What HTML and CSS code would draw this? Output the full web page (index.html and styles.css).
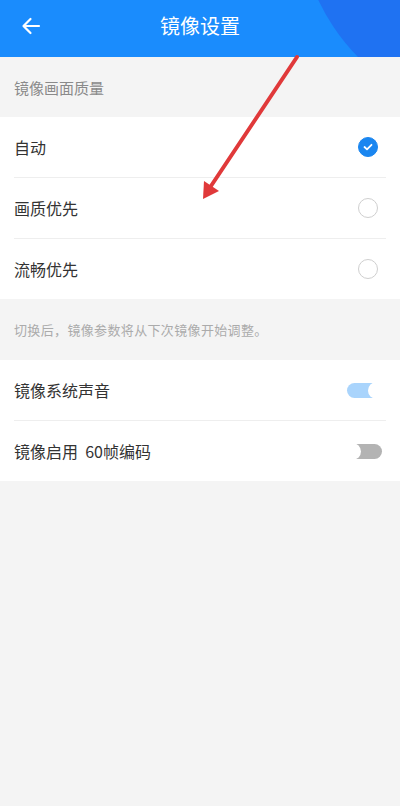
FILE: index.html
```html
<!DOCTYPE html>
<html lang="zh">
<head>
<meta charset="utf-8">
<link rel="stylesheet" href="styles.css">
</head>
<body>
<div class="page">
  <header class="topbar">
    <div class="topbar-circle"></div>
    <svg class="back" width="20" height="18" viewBox="0 0 20 18"><path d="M18 9H3M9.5 2L2.5 9l7 7" fill="none" stroke="#fff" stroke-width="2.2" stroke-linecap="round" stroke-linejoin="round"/></svg>
    <h1 class="title">镜像设置</h1>
  </header>

  <div class="section-head">镜像画面质量</div>
  <div class="group">
    <div class="row"><span class="label">自动</span><span class="radio checked"><svg width="10" height="8" viewBox="0 0 10 8"><path d="M1.5 4l2.5 2.3L8.5 1.8" fill="none" stroke="#fff" stroke-width="1.8" stroke-linecap="round" stroke-linejoin="round"/></svg></span></div>
    <div class="row"><span class="label">画质优先</span><span class="radio"></span></div>
    <div class="row"><span class="label">流畅优先</span><span class="radio"></span></div>
  </div>
  <div class="note">切换后，镜像参数将从下次镜像开始调整。</div>
  <div class="group">
    <div class="row"><span class="label">镜像系统声音</span><span class="switch on"><span class="thumb"></span></span></div>
    <div class="row"><span class="label">镜像启用&nbsp; 60帧编码</span><span class="switch off"><span class="thumb"></span></span></div>
  </div>

  <svg class="annot" width="400" height="806" viewBox="0 0 400 806">
    <line x1="297" y1="57" x2="211" y2="186" stroke="#e0393a" stroke-width="4" stroke-linecap="round"/>
    <polygon points="203,199 204,181 219,191" fill="#e0393a"/>
  </svg>
</div>
</body>
</html>
```

FILE: styles.css
```css
* { box-sizing: border-box; margin: 0; padding: 0; }
html, body { width: 400px; height: 806px; }
body {
  background: #f4f4f4;
  font-family: "Noto Sans CJK SC", "Noto Sans", sans-serif;
  overflow: hidden;
}
.page { position: relative; width: 400px; height: 806px; }
.topbar {
  position: relative;
  height: 57px;
  background: #1a8cfd;
  display: flex;
  align-items: center;
  justify-content: center;
  padding-bottom: 5px;
  overflow: hidden;
}
.topbar-circle {
  position: absolute;
  left: 298px;
  top: -300px;
  width: 420px;
  height: 420px;
  border-radius: 50%;
  background: #1f72f2;
}
.back { position: absolute; left: 21px; top: 17px; }
.title {
  position: relative;
  color: #fff;
  font-size: 20px;
  font-weight: 400;
  line-height: 1;
}
.section-head {
  height: 60px;
  padding-left: 14px;
  display: flex;
  align-items: center;
  font-size: 15px;
  color: #8a8a8a;
}
.group { background: #fff; padding: 0 14px; }
.row {
  height: 61px;
  display: flex;
  align-items: center;
  justify-content: space-between;
  border-bottom: 1px solid #eeeeee;
}
.row:last-child { border-bottom: none; height: 60px; }
.label { font-size: 16px; color: #333; }
.radio {
  width: 20px;
  height: 20px;
  border-radius: 50%;
  border: 1.3px solid #cfcfcf;
  margin-right: 8px;
  display: flex;
  align-items: center;
  justify-content: center;
}
.radio.checked { background: #1a86f0; border-color: #1a86f0; }
.note {
  height: 61px;
  padding-left: 14px;
  display: flex;
  align-items: center;
  font-size: 13px;
  letter-spacing: 0.35px;
  color: #ababab;
}
.switch {
  position: relative;
  width: 36px;
  height: 15px;
  border-radius: 8px;
  margin-right: 3px;
}
.switch.on { background: #a9d4fc; margin-right: 3px; }
.switch.off { background: #b3b3b3; margin-right: 4px; }
.thumb {
  position: absolute;
  top: -1px;
  width: 17px;
  height: 17px;
  border-radius: 50%;
  background: #fff;
}
.switch.on .thumb { right: -2px; }
.switch.off .thumb { left: -2px; }
.annot { position: absolute; left: 0; top: 0; pointer-events: none; }
```
